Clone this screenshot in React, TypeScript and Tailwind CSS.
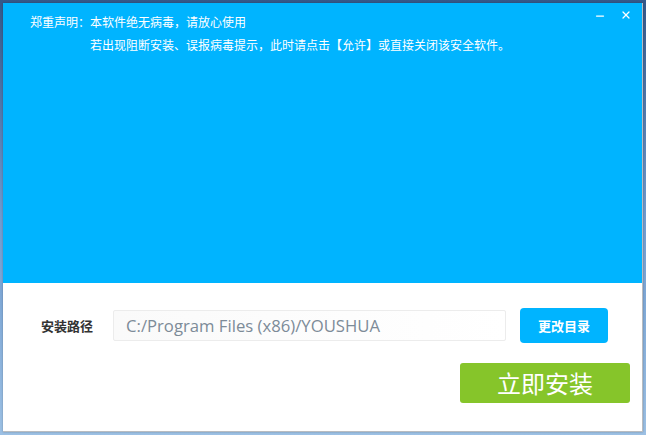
import { Minus, X } from "lucide-react"

const cjk = { fontFamily: '"Microsoft YaHei", "Noto Sans CJK SC", "Noto Sans", sans-serif' }

function App() {
	return (
		<div className="w-[646px] h-[435px] pt-[3px] pl-[3px] bg-gradient-to-b from-[#34588a] via-[#6f9bcf] to-[#9cc0e4] overflow-hidden" style={cjk}>
			<div className="w-[640px] h-[429px] flex flex-col bg-white border-r border-b border-[#b9bcc0] shadow-[0_0_2px_rgba(0,0,0,0.25)]">
				<div className="h-[280px] bg-[#00b4ff] text-white text-[12px] flex justify-between">
					<div className="pl-[27px] pt-[7px] leading-[23px]">
						<div className="flex">
							<span className="w-[60px] shrink-0">郑重声明：</span>
							<span>本软件绝无病毒，请放心使用</span>
						</div>
						<div className="pl-[60px]">若出现阻断安装、误报病毒提示，此时请点击【允许】或直接关闭该安全软件。</div>
					</div>
					<div className="flex items-start gap-[14px] pt-[5px] pr-[10px]">
						<Minus size={12} strokeWidth={2.5} className="mt-[2px]" />
						<X size={12} strokeWidth={2.5} className="mt-[1px]" />
					</div>
				</div>
				<div className="flex-1 flex flex-col">
					<div className="flex items-center pt-[25px] pl-[38px]">
						<span className="w-[72px] text-[13px] font-bold text-[#333]">安装路径</span>
						<div className="w-[393px] h-[31px] flex items-center pl-[12px] border border-[#ececec] rounded-[2px] bg-gradient-to-r from-[#fafafa] to-white text-[16.7px] text-[#7d8b98]" style={{ fontFamily: '"Segoe UI", "Open Sans", "Noto Sans", sans-serif' }}>
							C:/Program Files (x86)/YOUSHUA
						</div>
						<button className="ml-[14px] w-[88px] h-[35px] rounded-[4px] bg-[#00b4ff] text-white text-[13px] font-bold">更改目录</button>
					</div>
					<div className="flex justify-end pr-[12px] pt-[20px]">
						<button className="w-[170px] h-[40px] rounded-[3px] bg-[#86c52a] text-white text-[24px]">立即安装</button>
					</div>
				</div>
			</div>
		</div>
	)
}

export default App
